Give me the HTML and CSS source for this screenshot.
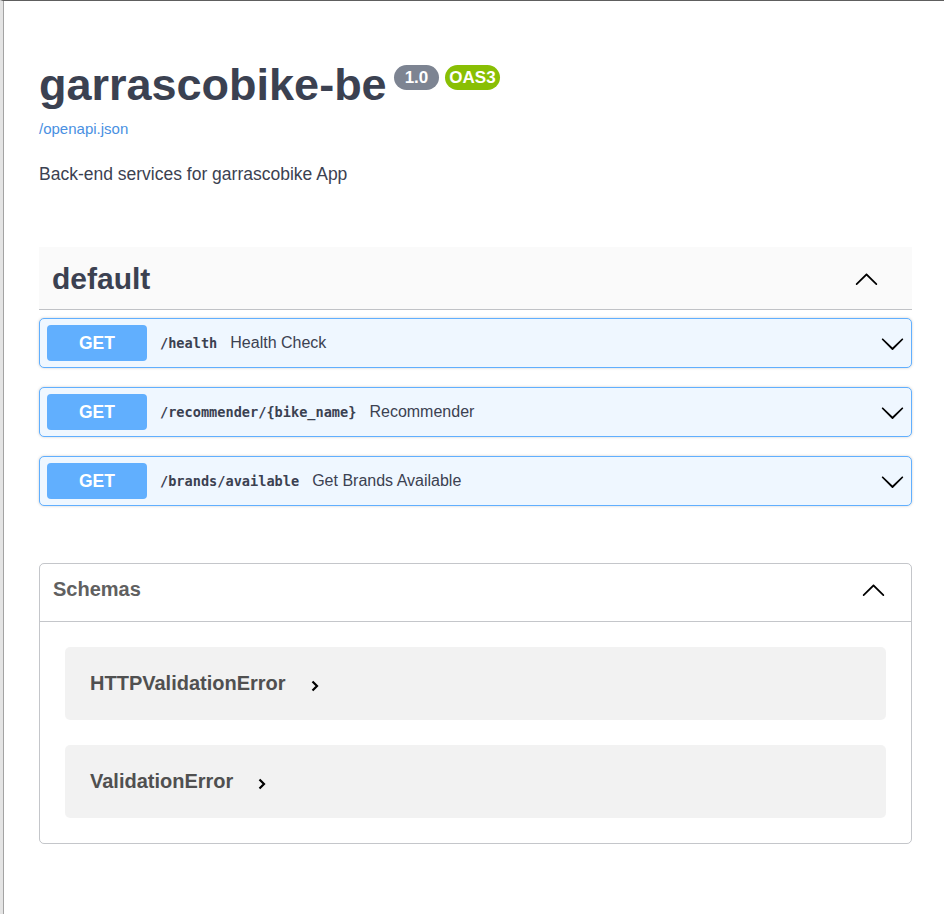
FILE: index.html
```html
<!DOCTYPE html>
<html lang="en">
<head>
    <meta charset="UTF-8">
    <meta name="viewport" content="width=device-width, initial-scale=1.0">
    <title>garrascobike-be - Swagger UI</title>
    <link rel="stylesheet" href="styles.css">
</head>
<body>

    <div class="page">

        <!-- Info -->
        <div class="info">
            <div class="title-row">
                <h1 class="title">garrascobike-be</h1>
                <span class="badge version">1.0</span>
                <span class="badge oas">OAS3</span>
            </div>
            <a class="spec-link" href="#">/openapi.json</a>
            <p class="description">Back-end services for garrascobike App</p>
        </div>

        <!-- Operations -->
        <div class="tag-section">
            <div class="tag-header">
                <h3>default</h3>
                <svg class="arrow" width="25" height="25" viewBox="0 0 20 20"><path d="M17.418 14.908c.272.268.709.268.979 0s.271-.701 0-.969l-7.908-7.83c-.27-.268-.707-.268-.979 0l-7.908 7.83c-.27.268-.27.701 0 .969.271.268.709.268.979 0L10 7.749l7.418 7.159z"/></svg>
            </div>

            <div class="opblock">
                <span class="method">GET</span>
                <span class="path">/health</span>
                <span class="summary">Health Check</span>
                <svg class="arrow" width="25" height="25" viewBox="0 0 20 20"><path d="M17.418 6.109c.272-.268.709-.268.979 0s.271.701 0 .969l-7.908 7.83c-.27.268-.707.268-.979 0l-7.908-7.83c-.27-.268-.27-.701 0-.969.271-.268.709-.268.979 0L10 13.25l7.418-7.141z"/></svg>
            </div>

            <div class="opblock">
                <span class="method">GET</span>
                <span class="path">/recommender/{bike_name}</span>
                <span class="summary">Recommender</span>
                <svg class="arrow" width="25" height="25" viewBox="0 0 20 20"><path d="M17.418 6.109c.272-.268.709-.268.979 0s.271.701 0 .969l-7.908 7.83c-.27.268-.707.268-.979 0l-7.908-7.83c-.27-.268-.27-.701 0-.969.271-.268.709-.268.979 0L10 13.25l7.418-7.141z"/></svg>
            </div>

            <div class="opblock">
                <span class="method">GET</span>
                <span class="path">/brands/available</span>
                <span class="summary">Get Brands Available</span>
                <svg class="arrow" width="25" height="25" viewBox="0 0 20 20"><path d="M17.418 6.109c.272-.268.709-.268.979 0s.271.701 0 .969l-7.908 7.83c-.27.268-.707.268-.979 0l-7.908-7.83c-.27-.268-.27-.701 0-.969.271-.268.709-.268.979 0L10 13.25l7.418-7.141z"/></svg>
            </div>
        </div>

        <!-- Schemas -->
        <div class="models">
            <div class="models-header">
                <h4>Schemas</h4>
                <svg class="arrow" width="25" height="25" viewBox="0 0 20 20"><path d="M17.418 14.908c.272.268.709.268.979 0s.271-.701 0-.969l-7.908-7.83c-.27-.268-.707-.268-.979 0l-7.908 7.83c-.27.268-.27.701 0 .969.271.268.709.268.979 0L10 7.749l7.418 7.159z"/></svg>
            </div>
            <div class="models-body">
                <div class="model">
                    <span class="model-title">HTTPValidationError</span>
                    <svg class="model-toggle" width="8" height="12" viewBox="0 0 8 12"><polyline points="1.5,1.5 6,6 1.5,10.5" fill="none" stroke="#000" stroke-width="2.2"/></svg>
                </div>
                <div class="model">
                    <span class="model-title">ValidationError</span>
                    <svg class="model-toggle" width="8" height="12" viewBox="0 0 8 12"><polyline points="1.5,1.5 6,6 1.5,10.5" fill="none" stroke="#000" stroke-width="2.2"/></svg>
                </div>
            </div>
        </div>

    </div>

</body>
</html>
```

FILE: styles.css
```css
body {
    margin: 0;
    background: #fff;
    color: #3b4151;
    font-family: 'Liberation Sans', Arial, sans-serif;
    border-top: 1px solid #5e5e5e;
    border-left: 3px solid #e4e4e4;
}

.page {
    min-height: calc(100vh - 1px);
    box-sizing: border-box;
    border-left: 1px solid #a3a3a3;
    padding: 58px 32px 40px 35px;
}

/* Info */
.title-row {
    display: flex;
    align-items: flex-start;
}

.title {
    margin: 0;
    font-size: 45px;
    line-height: 52px;
    font-weight: bold;
    color: #3b4151;
}

.badge {
    margin-top: 6px;
    height: 25px;
    line-height: 25px;
    border-radius: 13px;
    color: #fff;
    font-size: 17px;
    font-weight: bold;
}

.version {
    margin-left: 7px;
    padding: 0 11px;
    background: #7d8492;
}

.oas {
    margin-left: 6px;
    padding: 0 4px;
    background: #89bf04;
}

.spec-link {
    display: block;
    margin-top: 9px;
    font-size: 15px;
    line-height: 18px;
    color: #4990e2;
    text-decoration: none;
}

.description {
    margin: 26px 0 0;
    font-size: 17.5px;
    line-height: 21px;
}

/* Operations */
.tag-section {
    margin-top: 62px;
}

.tag-header {
    display: flex;
    align-items: center;
    justify-content: space-between;
    height: 62px;
    padding: 0 33px 0 13px;
    background: #fafafa;
    border-bottom: 1px solid rgba(59, 65, 81, 0.3);
}

.tag-header h3 {
    margin: 0;
    font-size: 30px;
    line-height: 35px;
    font-weight: bold;
}

.arrow {
    flex-shrink: 0;
    fill: #000;
}

.opblock {
    display: flex;
    align-items: center;
    height: 50px;
    box-sizing: border-box;
    margin-top: 8px;
    margin-bottom: 19px;
    padding: 0 6px 0 7px;
    background: #eff7ff;
    border: 1px solid #61affe;
    border-radius: 5px;
    box-shadow: 0 0 3px rgba(0, 0, 0, 0.19);
}

.opblock + .opblock {
    margin-top: 0;
}

.method {
    width: 100px;
    height: 36px;
    line-height: 36px;
    flex-shrink: 0;
    text-align: center;
    background: #61affe;
    color: #fff;
    border-radius: 4px;
    font-size: 17.5px;
    font-weight: bold;
}

.path {
    padding-left: 13px;
    font-family: 'DejaVu Sans Mono', monospace;
    font-size: 13.6px;
    font-weight: bold;
    color: #3b4151;
}

.summary {
    flex: 1;
    padding-left: 13px;
    font-size: 16px;
    color: #3b4151;
}

/* Schemas */
.models {
    margin-top: 57px;
    border: 1px solid rgba(59, 65, 81, 0.3);
    border-radius: 5px;
}

.models-header {
    display: flex;
    align-items: center;
    justify-content: space-between;
    height: 58px;
    box-sizing: border-box;
    padding: 0 25px 6px 13px;
    border-bottom: 1px solid rgba(59, 65, 81, 0.3);
}

.models-header h4 {
    margin: 0;
    font-size: 20px;
    line-height: 23px;
    font-weight: bold;
    color: #606060;
}

.models-body {
    display: flex;
    flex-direction: column;
    gap: 25px;
    padding: 25px;
}

.model {
    display: flex;
    align-items: center;
    gap: 25px;
    height: 73px;
    padding-left: 25px;
    background: rgba(0, 0, 0, 0.05);
    border-radius: 5px;
}

.model-title {
    font-size: 20px;
    font-weight: bold;
    color: #505050;
}

.model-toggle {
    margin-top: 4px;
}
```
